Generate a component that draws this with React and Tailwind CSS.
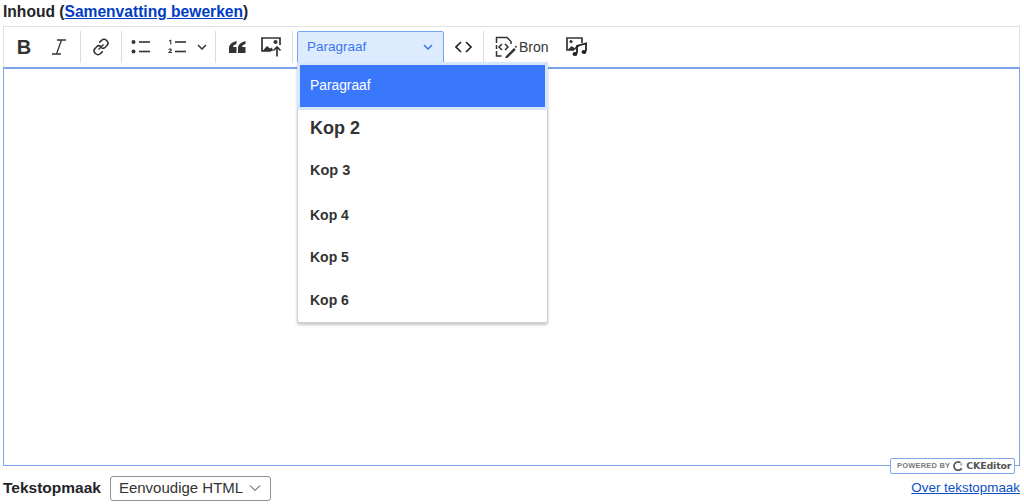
import React from "react";

const Sep = () => <div className="w-px h-8 bg-[#dcdcdc] shrink-0" />;

const Btn = ({ w, children }) => (
  <div className={`flex items-center justify-center h-8 shrink-0 ${w}`}>{children}</div>
);

const ItalicIcon = () => (
  <svg width="16" height="16" viewBox="0 0 16 16" fill="none" stroke="#333" strokeWidth="1.3">
    <path d="M6 1h9M1 15h9M10.5 1L5.5 15" />
  </svg>
);

const LinkIcon = () => (
  <svg width="20" height="20" viewBox="0 0 20 20" fill="none" stroke="#333" strokeWidth="1.5">
    <path d="M8.2 5.6l2.3-2.2a3.4 3.4 0 0 1 5 0l.4.4a3.4 3.4 0 0 1 0 4.8l-1.6 1.7c-1.2 1.2-3 1.2-4.2.2" />
    <path d="M11.8 14.4l-2.3 2.2a3.4 3.4 0 0 1-5 0l-.4-.4a3.4 3.4 0 0 1 0-4.8l1.6-1.7c1.2-1.2 3-1.2 4.2-.2" />
    <path d="M7.5 12.5l5-5" />
  </svg>
);

const BulletIcon = () => (
  <svg width="20" height="16" viewBox="0 0 20 16" fill="#333">
    <circle cx="2.5" cy="3" r="2" />
    <circle cx="2.5" cy="12.5" r="2" />
    <rect x="8" y="2.2" width="11" height="1.6" />
    <rect x="8" y="11.7" width="11" height="1.6" />
  </svg>
);

const NumberIcon = () => (
  <svg width="20" height="16" viewBox="0 0 20 16" fill="#333">
    <rect x="8" y="2.2" width="11" height="1.6" />
    <rect x="8" y="11.7" width="11" height="1.6" />
    <path d="M2 1.5l1.5-.8h.8v4.8H3.2V2l-1.2.5zM1.4 10.7c.3-.8 1-1.1 1.7-1.1 1 0 1.7.5 1.7 1.3 0 .7-.5 1.2-1.8 2.2h1.9v1H1.3v-.8c1.5-1.3 2.3-1.9 2.3-2.3 0-.3-.2-.5-.6-.5-.3 0-.6.2-.8.6z" />
  </svg>
);

const Chevron = ({ color = "#333" }) => (
  <svg width="10" height="6" viewBox="0 0 10 6" fill="none" stroke={color} strokeWidth="1.5">
    <path d="M1 1l4 4 4-4" />
  </svg>
);

const QuoteIcon = () => (
  <svg width="17" height="12" viewBox="0 0 17 12" fill="#333">
    <path d="M7.5 0C3.5 1 0 3.5 0 7v5h7.5V6H4c.2-1.4 1.6-2.6 3.5-3zM16.5 0C12.5 1 9 3.5 9 7v5h7.5V6H13c.2-1.4 1.6-2.6 3.5-3z" />
  </svg>
);

const ImageUploadIcon = () => (
  <svg width="21" height="20" viewBox="0 0 21 20" fill="none">
    <path d="M10 14H1V1h18v7" stroke="#333" strokeWidth="1.7" />
    <circle cx="14.5" cy="5" r="2" fill="#333" />
    <path d="M1.5 14l4.5-5 3 2.5 2-1 1 3.5z" fill="#333" />
    <path d="M16 19.5v-9M12.5 13.5l3.5-3.5 3.5 3.5" stroke="#333" strokeWidth="1.7" />
  </svg>
);

const CodeIcon = () => (
  <svg width="17" height="12" viewBox="0 0 17 12" fill="none" stroke="#222" strokeWidth="1.6">
    <path d="M6 1L1 6l5 5M11 1l5 5-5 5" />
  </svg>
);

const SourceIcon = () => (
  <svg width="22" height="22" viewBox="0 0 22 22" fill="none" stroke="#333" strokeWidth="1.5">
    <path d="M1.5 7V1.5h10.5l4 4V8" />
    <path d="M1.5 15v5h5M1.5 9v4" />
    <path d="M7 8l-3 3 3 3M10 8l3 3-3 3" />
    <path d="M11 20l8-8 1.8 1.8-8 8-2.8.6z" fill="#333" stroke="none" />
    <path d="M19.6 10.6l1-1 1.4 1.4-1 1z" fill="#333" stroke="none" />
  </svg>
);

const MediaIcon = () => (
  <svg width="22" height="20" viewBox="0 0 22 20" fill="none">
    <path d="M8 13H1V1h15v5" stroke="#333" strokeWidth="1.7" />
    <circle cx="5" cy="4.5" r="1.6" fill="#333" />
    <path d="M1.5 13l4-4 3 2 3-3 2 1-5 4z" fill="#333" />
    <path d="M11 16V9l9-2.5V14" stroke="#222" strokeWidth="1.8" />
    <ellipse cx="9" cy="17" rx="2.5" ry="2" fill="#222" />
    <ellipse cx="18" cy="15" rx="2.5" ry="2" fill="#222" />
  </svg>
);

const CkLogo = () => (
  <svg width="10" height="10" viewBox="0 0 10 10" fill="none" strokeWidth="1.7">
    <path d="M8.8 7.2A4.2 4.2 0 1 1 7.5 1.6" stroke="#555" />
    <circle cx="8.2" cy="3.4" r="1.3" fill="#bbb" />
  </svg>
);

export default function App() {
  return (
    <div className="w-[1024px] h-[504px] overflow-hidden bg-white text-[#222] font-['Liberation_Sans',Arial,sans-serif]">
      <div className="h-[26px] pl-[3px] pt-[3px] text-[15.6px] leading-[18px] font-bold text-[#232429]">
        Inhoud (<a className="text-[#003cc5] underline">Samenvatting bewerken</a>)
      </div>

      <div className="relative ml-[3px] w-[1017px]">
        <div className="h-[41px] flex items-center border border-b-0 border-[#e2e2e2] pl-[2px]">
          <Btn w="w-[36px]"><span className="text-[20px] font-bold text-[#333]">B</span></Btn>
          <Btn w="w-[38px] pr-[4px]"><ItalicIcon /></Btn>
          <Sep />
          <Btn w="w-[40px]"><LinkIcon /></Btn>
          <Sep />
          <Btn w="w-[38px]"><BulletIcon /></Btn>
          <Btn w="w-[34px]"><NumberIcon /></Btn>
          <Btn w="w-[16px]"><Chevron /></Btn>
          <Btn w="w-[5px]"></Btn>
          <Sep />
          <Btn w="w-[42px]"><QuoteIcon /></Btn>
          <Btn w="w-[34px] pr-[8px]"><ImageUploadIcon /></Btn>
          <Sep />
          <div className="ml-1 w-[147px] h-[32px] shrink-0 flex items-center justify-between pl-[9px] pr-[10px] bg-[#dcebfd] border border-[#76a5f5] rounded-t-[2px] text-[13.5px] text-[#3a78f2]">
            <span>Paragraaf</span>
            <Chevron color="#3a78f2" />
          </div>
          <Btn w="w-[39px]"><CodeIcon /></Btn>
          <Sep />
          <div className="flex items-center h-8 ml-[11px] gap-[2px] shrink-0">
            <SourceIcon />
            <span className="text-[14px] text-[#333]">Bron</span>
          </div>
          <Btn w="w-[57px]"><MediaIcon /></Btn>
        </div>

        <div className="h-[399px] border border-t-2 border-[#7ba4ec] bg-white" />

        <div className="absolute left-[294px] top-[36px] w-[251px] h-[261px] bg-white border border-[#cfcfcf] rounded-b-[2px] shadow-[0_2px_3px_rgba(0,0,0,0.22)] flex flex-col text-[#333]">
          <div className="h-[48px] -mx-px -mt-px shrink-0 border-[3px] border-[#d6e6fc] rounded-[2px]">
            <div className="h-full bg-[#3a78fb] flex items-center pl-[10px] text-[13.8px] text-white">Paragraaf</div>
          </div>
          <div className="h-[37px] flex items-center pl-[12px] text-[18px] font-bold">Kop 2</div>
          <div className="h-[47px] flex items-center pl-[12px] text-[14.5px] font-bold">Kop 3</div>
          <div className="h-[42px] flex items-center pl-[12px] text-[14px] font-bold">Kop 4</div>
          <div className="h-[43px] flex items-center pl-[12px] text-[14px] font-bold">Kop 5</div>
          <div className="h-[42px] flex items-center pl-[12px] text-[14px] font-bold">Kop 6</div>
        </div>

        <div className="absolute right-[5px] top-[432px] h-[16px] w-[125px] pl-[6px] bg-white border border-[#7ea6ea] rounded-[2px] flex items-center gap-[3px]">
          <span className="text-[7.5px] font-bold text-[#7a7a7a] tracking-[0.2px] whitespace-nowrap">POWERED BY</span>
          <CkLogo />
          <span className="text-[9.5px] font-bold text-[#555] font-['DejaVu_Sans',sans-serif] tracking-[-0.2px]">CKEditor</span>
        </div>
      </div>

      <div className="flex items-center h-[38px] mt-[3px] pl-[3px] pr-[4px]">
        <span className="text-[15.5px] font-bold text-[#232429]">Tekstopmaak</span>
        <div className="ml-[9px] w-[161px] h-[25px] flex items-center gap-[6px] pl-[8px] border border-[#8f8f8f] rounded-[3px] text-[15px] text-[#333]">
          <span className="whitespace-nowrap">Eenvoudige HTML</span>
          <svg width="12" height="7" viewBox="0 0 12 7" fill="none" stroke="#333" strokeWidth="1">
            <path d="M1 .5l5 5 5-5" />
          </svg>
        </div>
        <a className="ml-auto text-[13.4px] text-[#0a4fc4] underline">Over tekstopmaak</a>
      </div>
    </div>
  );
}
